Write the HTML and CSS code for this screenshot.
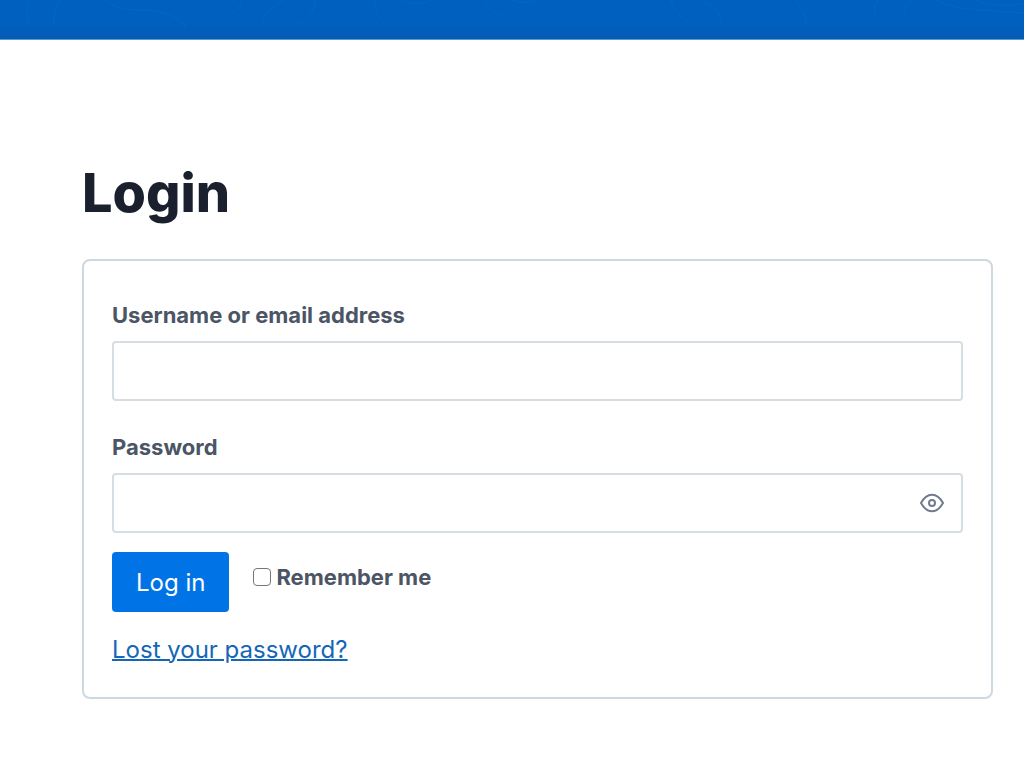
FILE: index.html
```html
<!DOCTYPE html>
<html lang="en">
<head>
<meta charset="utf-8">
<meta name="viewport" content="width=device-width, initial-scale=1">
<title>Login</title>
<link rel="stylesheet" href="styles.css">
</head>
<body>
<header class="banner">
  <svg class="banner-lines" viewBox="0 0 1024 39" preserveAspectRatio="xMidYMin slice" aria-hidden="true">
    <path d="M30 0q-6 12 0 28M60 0q-8 12-6 24M105 0q10 10 32 10t35 6 14 12M230 14q10-4 12-14M262 26q2-16 22-26M300 24q14-10 16-24M375 0q-2 14 14 26M403 0q12 8 28 0M485 0q4 12 18 16M512 0q12 5 26 0M670 0q6 14 18 22M702 0q18 8 20 22M795 0q10 10 12 26M875 14q-2-10 4-14M905 14q0-10 8-14M935 0q14 6 26 8t63 5M975 0q20 8 49 4"/>
  </svg>
</header>
<main class="page">
  <h1 class="title">Login</h1>
  <form class="card">
    <div class="field">
      <label class="label" for="username">Username or email address</label>
      <input class="input" id="username" type="text">
    </div>
    <div class="field">
      <label class="label" for="password">Password</label>
      <div class="password">
        <input class="input" id="password" type="password">
        <button class="reveal" type="button" aria-label="Show password">
          <svg viewBox="0 0 24 20" width="24" height="20" aria-hidden="true"><path d="M1 10C7-1 17-1 23 10C17 21 7 21 1 10Z"/><circle cx="12" cy="10" r="3"/></svg>
        </button>
      </div>
    </div>
    <div class="actions">
      <button class="submit" type="submit">Log in</button>
      <label class="remember"><input class="check" type="checkbox">Remember me</label>
    </div>
    <a class="lost" href="#">Lost your password?</a>
  </form>
</main>
</body>
</html>
```
FILE: styles.css
```css
* { box-sizing: border-box; }
body { margin: 0; background: #fff; font-family: Inter, "Liberation Sans", sans-serif; color: #4b5565; }
.banner { height: 40px; background: linear-gradient(#0060bf 60%, #055bb5); border-bottom: 1px solid #5d97cf; overflow: hidden; }
.banner-lines { display: block; width: 100%; height: 39px; fill: none; stroke: #0965c1; stroke-width: 1; }
.page { padding: 120px 31px 76px 82px; }
.title { margin: 0 0 34px; font-size: 54px; line-height: 65px; font-weight: 800; color: #1a202e; }
.card { border: 2px solid #cdd9e1; border-radius: 8px; padding: 38px 28px 29px; }
.field { margin-bottom: 30px; }
.field + .field { margin-bottom: 19px; }
.label { display: block; margin-bottom: 10px; font-size: 22px; line-height: 32px; font-weight: 700; }
.input { display: block; width: 100%; height: 60px; padding: 0 16px; border: 2px solid #d5dee3; border-radius: 4px; background: #fff; font: inherit; font-size: 24px; color: inherit; }
.password { position: relative; }
.password .input { padding-right: 64px; }
.reveal { position: absolute; top: 0; right: 19px; height: 100%; padding: 0; border: 0; background: none; display: flex; align-items: center; }
.reveal svg { fill: none; stroke: #717b90; stroke-width: 2; }
.actions { display: flex; align-items: flex-start; gap: 24px; margin-bottom: 20px; }
.submit { height: 60px; padding: 0 24px; border: 0; border-radius: 4px; background: #0073e6; color: #fff; font: inherit; font-size: 24px; }
.remember { display: flex; align-items: center; gap: 5px; margin-top: 9px; font-size: 22px; line-height: 32px; font-weight: 700; }
.check { appearance: none; width: 18px; height: 18px; margin: 0; border: 1px solid #767676; border-radius: 4px; background: #fff; }
.check:checked { background: #0073e6; }
.lost { display: inline-block; vertical-align: top; font-size: 24px; line-height: 36px; color: #1466b8; text-decoration-thickness: 2px; }
```
